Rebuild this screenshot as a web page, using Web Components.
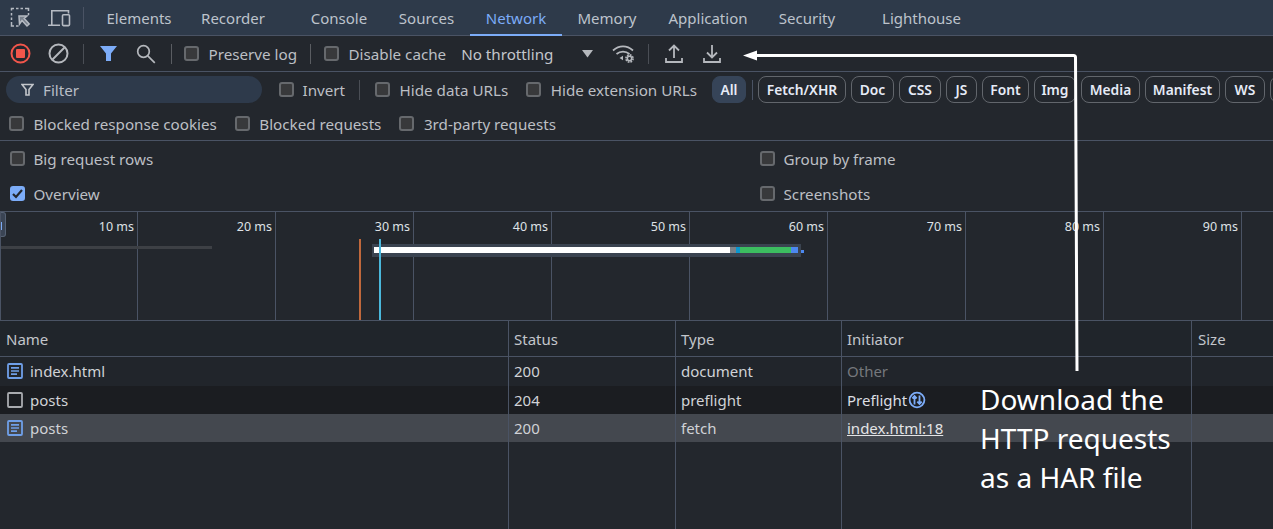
<!doctype html>
<html lang="en">
<head>
<meta charset="utf-8">
<title>Network panel</title>
<style>
  html, body { margin: 0; height: 100%; background: #23272d; overflow: hidden; }
  body {
    position: relative;
    font: 15.2px "Noto Sans", "Open Sans", sans-serif;
    color: #c3c6cb;
    display: flex;
    flex-direction: column;
    height: 529px;
  }
  net-table { flex: 1; }
</style>
</head>
<body>
  <tab-bar>
    <tab-item style="width:94px">Elements</tab-item>
    <tab-item style="width:94px">Recorder</tab-item>
    <tab-item style="width:88px;margin-left:15px">Console</tab-item>
    <tab-item style="width:87px">Sources</tab-item>
    <tab-item style="width:92px" active>Network</tab-item>
    <tab-item style="width:90px">Memory</tab-item>
    <tab-item style="width:112px">Application</tab-item>
    <tab-item style="width:86px">Security</tab-item>
    <tab-item style="width:109px;margin-left:17px">Lighthouse</tab-item>
  </tab-bar>
  <net-toolbar></net-toolbar>
  <filter-bar></filter-bar>
  <settings-pane></settings-pane>
  <net-overview></net-overview>
  <net-table>
    <net-row name="index.html" status="200" type="document" icon="doc" style="height:29px;--pb:1px">
      <span style="color:#75787d">Other</span>
    </net-row>
    <net-row name="posts" status="204" type="preflight" icon="box" style="height:28px;background:#1b1d21">
      <span style="color:#dcdee1;display:inline-flex;align-items:center">Preflight<svg width="18" height="18" viewBox="0 0 18 18" style="margin-left:1px"><circle cx="9" cy="9" r="7.4" fill="none" stroke="#7cacf8" stroke-width="1.8"/><path d="M6.500 13.500V5M4.300 7.300 6.500 5l2.200 2.300M11.500 4.500V13M9.300 10.700l2.200 2.300 2.200-2.300" fill="none" stroke="#7cacf8" stroke-width="1.800"/></svg></span>
    </net-row>
    <net-row name="posts" status="200" type="fetch" icon="doc" style="height:28px;background:#44484f">
      <span style="color:#e3e4e6;text-decoration:underline">index.html:18</span>
    </net-row>
  </net-table>
  <har-callout>Download the<br>HTTP requests<br>as a HAR file</har-callout>

<script>
// hoja compartida: cada sombra la incluye en su <style>
const base = `
  :host { box-sizing: border-box; }
  * { box-sizing: border-box; }
  svg { display: block; flex: none; }
  .sep { width: 1px; height: 20px; background: #4a4e55; flex: none; }
`

function define(name, css, html) {
  customElements.define(name, class extends HTMLElement {
    constructor() {
      super()
      const root = this.attachShadow({ mode: 'open' })
      const markup = typeof html === 'function' ? html(this) : html
      root.innerHTML = `<style>${base}${css}</style>${markup}`
    }
  })
}

define('tab-item', `
  :host { display: flex; align-items: center; justify-content: center; height: 36px; color: #bdc3cc; position: relative; font-size: 15px; white-space: nowrap; flex: none; }
  :host([active]) { color: #7cacf8; }
  :host([active])::after { content: ""; position: absolute; left: 0; right: 0; bottom: 0; height: 2px; background: #7cacf8; }
`, `<slot></slot>`)

define('tab-bar', `
  :host { display: flex; align-items: flex-start; height: 36px; background: #2e3a4a; box-shadow: inset 0 -1px #4a5364; flex: none; }
  .tools { display: flex; align-items: center; gap: 16px; padding-left: 10px; width: 92px; height: 35px; flex: none; }
  .sep { margin-left: -4px; height: 22px; background: #4a5364; }
`, `
  <div class="tools">
    <svg width="22" height="22" viewBox="0 0 22 22" fill="none" stroke="#b5bac2" stroke-width="1.500">
      <path d="M1.500 3.500V1.500h2.500M6 1.500h2.500M10.500 1.500H13M15 1.500h2.500l1 0v2.500M18.500 6v2M1.500 6v2.500M1.500 10.500V13M1.500 15v2.500l0 1.500h2.500M6 19h2.500"/>
      <path d="M9 9h8l-2.800 2.500 5 5.500-2.200 2-5-5.500L9.500 17z" fill="#b5bac2" fill-opacity=".55"/>
    </svg>
    <svg width="23" height="20" viewBox="0 0 23 20" fill="none" stroke="#b5bac2" stroke-width="1.600">
      <path d="M3.800 16.500V2.800H20.500V5.500M0 17.300h12"/><rect x="14.500" y="6.800" width="7" height="10.800" rx="1"/>
    </svg>
    <span class="sep"></span>
  </div>
  <slot></slot>
`)

const gray = '#b5b8bd'
define('net-toolbar', `
  :host { display: flex; align-items: center; height: 36px; border-bottom: 1px solid #4a5364; flex: none; padding-left: 10px; position: relative; }
  .t { white-space: nowrap; }
`, `
  <svg width="21" height="21" viewBox="0 0 21 21"><circle cx="10.500" cy="10.500" r="9" fill="none" stroke="#f2564b" stroke-width="2"/><rect x="6" y="6" width="9" height="9" rx="1" fill="#f2564b"/></svg>
  <svg style="margin-left:17px" width="21" height="21" viewBox="0 0 21 21" fill="none" stroke="${gray}" stroke-width="2"><circle cx="10.500" cy="10.500" r="9"/><path d="m4.500 16.500 12-12"/></svg>
  <span class="sep" style="margin-left:14px"></span>
  <svg style="margin-left:16px" width="17" height="17" viewBox="0 0 17 17"><path d="M0 1h17l-6 7.500V16H6V8.500z" fill="#7cacf8"/></svg>
  <svg style="margin-left:19px" width="20" height="20" viewBox="0 0 20 20" fill="none" stroke="${gray}" stroke-width="1.700"><circle cx="7.500" cy="7.500" r="5.800"/><path d="m11.800 11.800 7 7"/></svg>
  <span class="sep" style="margin-left:15px;background:#5a5d62"></span>
  <check-box style="margin-left:12px">Preserve log</check-box>
  <span class="sep" style="margin-left:13px;background:#5a5d62"></span>
  <check-box style="margin-left:13px">Disable cache</check-box>
  <span class="t" style="margin-left:15px">No throttling</span>
  <svg style="margin-left:29px" width="11" height="8" viewBox="0 0 11 8"><path d="M0 0h11L5.500 7.500z" fill="${gray}"/></svg>
  <svg style="margin-left:19px" width="24" height="20" viewBox="0 0 24 20" fill="none" stroke="${gray}" stroke-width="1.700">
    <path d="M1 6.500c6-5.500 14-5.500 20 0M4.500 10c3.800-3.300 9.200-3.300 13 0"/>
    <path d="M7.500 14 11 11.800v4.400z" fill="${gray}" stroke="none"/>
    <circle cx="17.500" cy="14.500" r="3.600" stroke-width="1.600" stroke-dasharray="1.800 1"/>
    <circle cx="17.500" cy="14.500" r="2.200" stroke-width="1.600"/>
  </svg>
  <span class="sep" style="margin-left:12px"></span>
  <svg style="margin-left:16px" width="18" height="20" viewBox="0 0 18 20" fill="none" stroke="${gray}" stroke-width="1.800"><path d="M9 14V2M4 6.500 9 1.500l5 5M1 14v4h16v-4"/></svg>
  <svg style="margin-left:20px" width="18" height="20" viewBox="0 0 18 20" fill="none" stroke="${gray}" stroke-width="1.800"><path d="M9 1v12M4 8.500l5 5 5-5M1 14v4h16v-4"/></svg>
`)

define('check-box', `
  :host { display: inline-flex; align-items: center; gap: 9.5px; white-space: nowrap; color: #bcbfc4; }
  .b { width: 15px; height: 15px; border-radius: 3px; border: 2px solid #66696d; background: #38393b; flex: none; }
  :host([checked]) .b { background: #7cacf8; border-color: #7cacf8; display: flex; align-items: center; justify-content: center; }
  .b svg { display: none; }
  :host([checked]) .b svg { display: block; }
`, `<span class="b"><svg width="11" height="10" viewBox="0 0 11 10"><path d="m1 5 3 3 6-7" fill="none" stroke="#23272d" stroke-width="2.200"/></svg></span><span><slot></slot></span>`)

define('type-pill', `
  :host { display: flex; align-items: center; justify-content: center; height: 27px; border: 1px solid #62666c; border-radius: 8px; color: #e6ebf7; font-weight: 600; font-size: 13.8px; flex: none; }
  :host([active]) { background: #364458; border-color: #364458; }
`, `<slot></slot>`)

const pills = [['Fetch/XHR', 88], ['Doc', 43], ['CSS', 42], ['JS', 31], ['Font', 47], ['Img', 42], ['Media', 59], ['Manifest', 75], ['WS', 40], ['', 20]]
define('filter-bar', `
  :host { display: block; flex: none; }
  .r { display: flex; align-items: center; height: 35px; overflow: hidden; }
  .r2 { display: flex; align-items: center; height: 34px; padding-left: 9px; border-bottom: 1px solid #4a5364; }
  .box { width: 256px; height: 27px; margin-left: 6px; background: #2e3a4b; border-radius: 14px; display: flex; align-items: center; gap: 9px; padding-left: 15px; color: #b9bec6; flex: none; }
  .pills { display: flex; gap: 5px; flex: none; margin-left: 5px; }
`, `
  <div class="r">
    <div class="box"><svg width="13" height="13" viewBox="0 0 13 13" fill="none" stroke="#c3c6cb" stroke-width="1.600"><path d="M1 1.500h11L8 6.500V12H5V6.500z"/></svg>Filter</div>
    <check-box style="margin-left:17px;gap:8.5px">Invert</check-box>
    <span class="sep" style="margin-left:14px"></span>
    <check-box style="margin-left:15px">Hide data URLs</check-box>
    <check-box style="margin-left:18px">Hide extension URLs</check-box>
    <type-pill active style="width:34px;margin-left:15px">All</type-pill>
    <span class="sep" style="margin-left:6px;background:#4a5364"></span>
    <div class="pills">${pills.map(p => `<type-pill style="width:${p[1]}px">${p[0]}</type-pill>`).join('')}</div>
  </div>
  <div class="r2">
    <check-box>Blocked response cookies</check-box>
    <check-box style="margin-left:18px">Blocked requests</check-box>
    <check-box style="margin-left:18px">3rd-party requests</check-box>
  </div>
`)

define('settings-pane', `
  :host { display: grid; grid-template-columns: 750px 1fr; grid-auto-rows: 35px; padding-left: 10px; align-items: center; height: 71px; border-bottom: 1px solid #4a5364; flex: none; }
  check-box { gap: 8.5px; }
`, `
  <check-box>Big request rows</check-box><check-box>Group by frame</check-box>
  <check-box checked>Overview</check-box><check-box>Screenshots</check-box>
`)

const ticks = [10, 20, 30, 40, 50, 60, 70, 80, 90]
define('net-overview', `
  :host { display: block; position: relative; height: 109px; border-bottom: 1px solid #4a5364; border-left: 1px solid #4a5364; flex: none; overflow: hidden; }
  .grid { display: grid; grid-template-columns: 137px repeat(8, 138px); height: 100%; }
  .tick { border-right: 1px solid #4a5364; text-align: right; padding: 6px 3px 0 0; font-size: 12.5px; color: #dfe2e6; }
  .m { position: absolute; }
`, `
  <div class="grid">${ticks.map(t => `<div class="tick">${t} ms</div>`).join('')}</div>
  <div class="m" style="left:-1px;top:0;width:6px;height:25px;background:#3a4454;border:1px solid #566274;border-left:0;border-radius:0 3px 3px 0"></div>
  <div class="m" style="left:-1px;top:10px;width:2px;height:8px;background:#7cacf8"></div>
  <div class="m" style="left:-1px;top:34px;width:212px;height:3px;background:#3d4045"></div>
  <div class="m" style="left:358px;top:27px;width:2px;height:81px;background:#c0683c"></div>
  <div class="m" style="left:371px;top:32px;width:429px;height:13px;background:#3a4350"></div>
  <div class="m" style="left:373px;top:35px;width:356px;height:6px;background:#fff"></div>
  <div class="m" style="left:729px;top:35px;width:6px;height:6px;background:#7d8288"></div>
  <div class="m" style="left:735px;top:35px;width:4px;height:6px;background:#0a97cf"></div>
  <div class="m" style="left:739px;top:35px;width:51px;height:6px;background:#3cbd60"></div>
  <div class="m" style="left:790px;top:35px;width:7px;height:6px;background:#4c88f0"></div>
  <div class="m" style="left:800px;top:38px;width:3px;height:3px;background:#4c88f0"></div>
  <div class="m" style="left:378px;top:27px;width:2px;height:81px;background:#4ab8dc"></div>
`)

// columnas de la tabla de peticiones
const cols = '509px 167px 166px 350px 1fr'
define('net-table', `
  :host { display: flex; flex-direction: column; min-height: 0; font-size: 15px; }
  .head, .fill { display: grid; grid-template-columns: ${cols}; }
  .head { height: 36px; background: #20252b; border-bottom: 1px solid #4a5364; align-items: stretch; color: #c3c6cb; flex: none; }
  .head div { padding: 0 5px; display: flex; align-items: center; border-right: 1px solid #4a5364; }
  .head div:first-child, .head div:last-child { padding-left: 6px; }
  .head div:last-child, .fill div:last-child { border-right: 0; }
  .fill { flex: 1; }
  .fill div { border-right: 1px solid #4a5364; }
`, `
  <div class="head"><div>Name</div><div>Status</div><div>Type</div><div>Initiator</div><div>Size</div></div>
  <slot></slot>
  <div class="fill"><div></div><div></div><div></div><div></div><div></div></div>
`)

const rowIcons = {
  doc: `<svg width="16" height="16" viewBox="0 0 16 16" fill="none" stroke="#6f9fe8"><rect x="1" y="1" width="14" height="14" rx="1" stroke-width="1.800"/><path d="M4 4.800h8M4 8h8M4 11.200h6" stroke-width="1.700"/></svg>`,
  box: `<svg width="16" height="16" viewBox="0 0 16 16" fill="none" stroke="#a9abaf"><rect x="1" y="1" width="14" height="14" rx="1" stroke-width="1.800"/></svg>`,
}
define('net-row', `
  :host { display: grid; grid-template-columns: ${cols}; flex: none; color: #d0d2d6; background: #21252b; }
  .c { padding: 0 5px var(--pb, 0); display: flex; align-items: center; border-right: 1px solid #4a5364; white-space: nowrap; }
  .c:last-child { border-right: 0; }
  .n { padding-left: 7px; gap: 7px; }
`, host => `
  <div class="c n">${rowIcons[host.getAttribute('icon')]}${host.getAttribute('name')}</div>
  <div class="c">${host.getAttribute('status')}</div>
  <div class="c">${host.getAttribute('type')}</div>
  <div class="c"><slot></slot></div>
  <div class="c"></div>
`)

// anotación superpuesta a la captura
define('har-callout', `
  :host { position: absolute; inset: 0; pointer-events: none; display: block; }
  svg { position: absolute; left: 0; top: 0; }
  .txt { position: absolute; left: 980px; top: 380px; font-size: 28px; line-height: 39px; color: #fff; white-space: nowrap; }
`, `
  <svg width="1273" height="529" viewBox="0 0 1273 529" fill="none">
    <path d="M755 55.500h318.500a2 2 0 0 1 2 2L1077 371" stroke="#fff" stroke-width="3"/>
    <path d="M743 55.500 757 50.500v10z" fill="#fff"/>
  </svg>
  <div class="txt"><slot></slot></div>
`)
</script>
</body>
</html>
